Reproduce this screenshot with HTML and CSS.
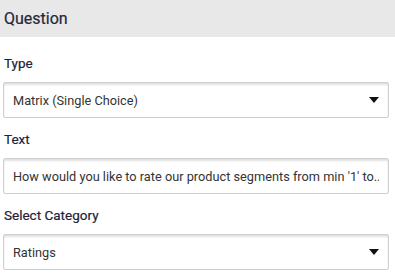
FILE: index.html
```html
<!DOCTYPE html>
<html>
<head>
<meta charset="utf-8">
<link rel="stylesheet" href="styles.css">
</head>
<body>
<div class="header">Question</div>
<div class="form">
  <div class="field">
    <div class="label">Type</div>
    <div class="box select">
      <span class="value">Matrix (Single Choice)</span>
      <span class="arrow"></span>
    </div>
  </div>
  <div class="field">
    <div class="label">Text</div>
    <div class="box">
      <span class="value">How would you like to rate our product segments from min '1' to..</span>
    </div>
  </div>
  <div class="field">
    <div class="label">Select Category</div>
    <div class="box select">
      <span class="value">Ratings</span>
      <span class="arrow"></span>
    </div>
  </div>
</div>
</body>
</html>
```
FILE: styles.css
```css
html, body {
  margin: 0;
  padding: 0;
  background: #fff;
  font-family: Roboto, "Liberation Sans", sans-serif;
}
.header {
  height: 37px;
  background: #e8e8e8;
  color: #26263a;
  font-size: 16px;
  line-height: 38px;
  padding-left: 4px;
  -webkit-text-stroke: 0.2px #26263a;
}
.form {
  display: flex;
  flex-direction: column;
  gap: 13px;
  padding: 18px 6px 0 3px;
}
.label {
  font-size: 13.5px;
  font-weight: 400;
  line-height: 16px;
  color: #22223a;
  margin-bottom: 11px;
  padding-left: 1px;
  -webkit-text-stroke: 0.2px #22223a;
}
.box {
  height: 36px;
  box-sizing: border-box;
  border: 1px solid #cfcfcf;
  border-radius: 2px;
  box-shadow: inset 0 2px 2px rgba(0,0,0,0.12);
  display: flex;
  align-items: center;
  padding: 0 9px 0 9px;
  font-size: 12.75px;
  color: #333;
}
.value {
  flex: 1;
  white-space: nowrap;
  overflow: hidden;
}
.arrow {
  width: 0;
  height: 0;
  border-left: 5px solid transparent;
  border-right: 5px solid transparent;
  border-top: 6px solid #111;
}
```
